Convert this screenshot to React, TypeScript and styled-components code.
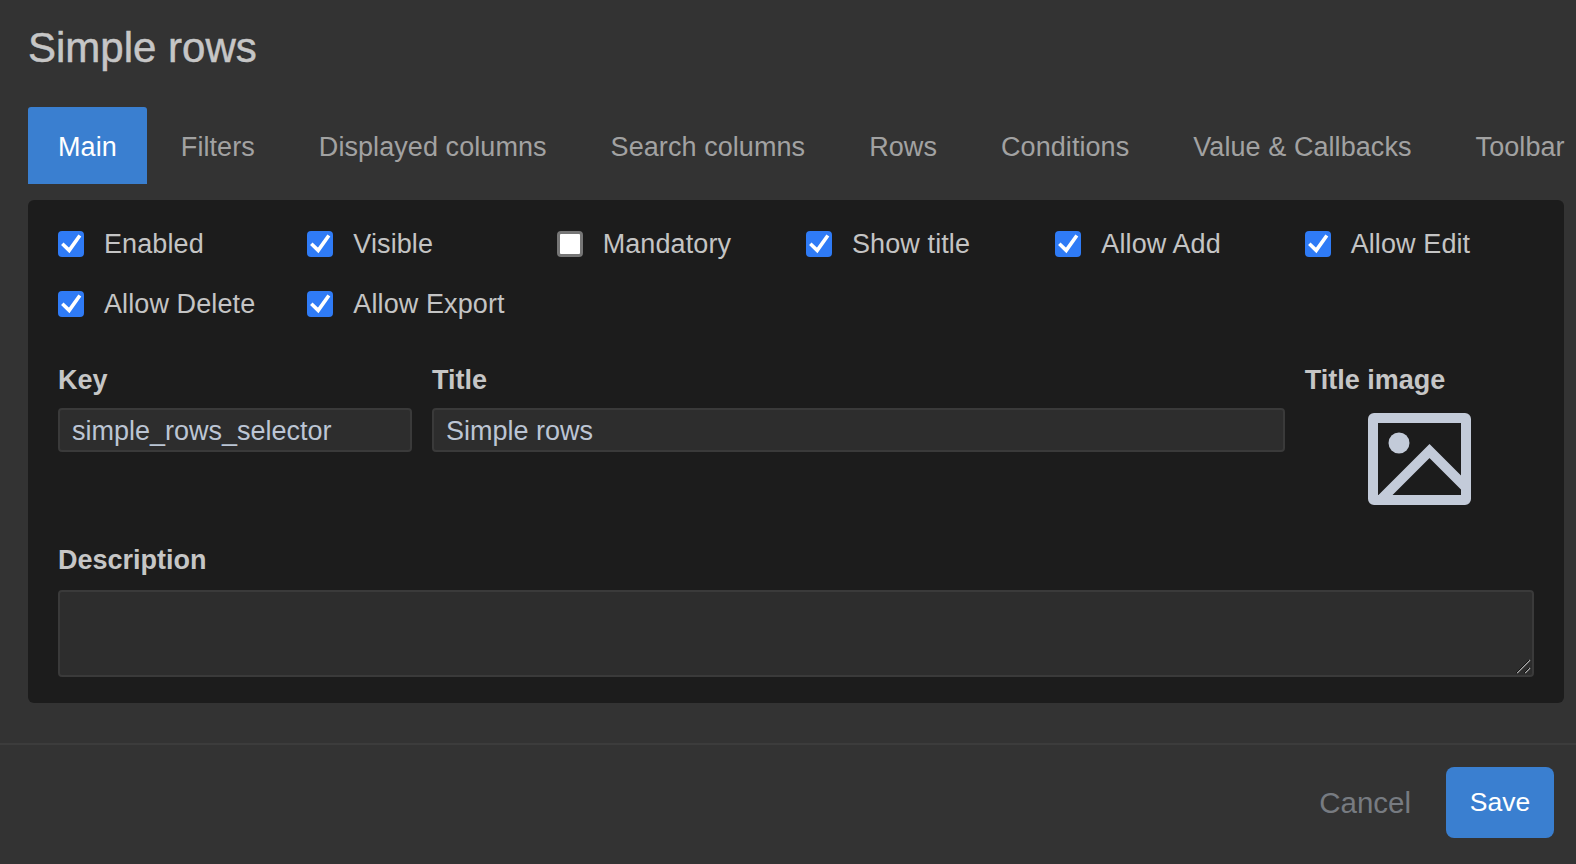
import React from "react";
import styled, { createGlobalStyle } from "styled-components";

const GlobalStyle = createGlobalStyle`
  html, body {
    margin: 0;
    padding: 0;
    background: #333333;
  }
  * {
    box-sizing: border-box;
  }
`;

const Page = styled.div`
  width: 1576px;
  height: 864px;
  overflow: hidden;
  background: #333333;
  font-family: "Liberation Sans", Arial, sans-serif;
  display: flex;
  flex-direction: column;
`;

const Header = styled.div`
  padding: 0 28px;
  height: 107px;
  flex: none;
`;

const Heading = styled.h1`
  margin: 0;
  padding-top: 24px;
  font-size: 42px;
  line-height: 48px;
  font-weight: 400;
  color: #c6c6c6;
  -webkit-text-stroke: 0.5px #c6c6c6;
`;

const Tabs = styled.div`
  display: flex;
  gap: 4px;
  padding: 0 28px;
  height: 77px;
  flex: none;
  white-space: nowrap;
`;

const Tab = styled.div<{ $active?: boolean }>`
  flex: none;
  padding: 0 30px;
  height: 77px;
  line-height: 81px;
  font-size: 27px;
  letter-spacing: 0.07px;
  border-radius: 3px 3px 0 0;
  background: ${(p) => (p.$active ? "#3a7fd0" : "transparent")};
  color: ${(p) => (p.$active ? "#ffffff" : "#a2a2a2")};
`;

const Panel = styled.div`
  margin: 16px 12px 0 28px;
  height: 503px;
  flex: none;
  padding: 30px 30px 0;
  background: #1c1c1c;
  border-radius: 6px;
`;

const Grid = styled.div`
  display: grid;
  grid-template-columns: repeat(12, 1fr);
  column-gap: 20px;
`;

const CheckGrid = styled(Grid)`
  row-gap: 30px;
`;

const CheckItem = styled.label`
  grid-column: span 2;
  display: flex;
  align-items: center;
  gap: 20px;
  height: 32px;
  margin-top: -2px;
  font-size: 27px;
  letter-spacing: 0.1px;
  color: #c4c4c4;
`;

const CheckBox = styled.span<{ $checked?: boolean }>`
  flex: none;
  width: 26px;
  height: 26px;
  border-radius: 4px;
  display: block;
  background: ${(p) => (p.$checked ? "#2f7bf6" : "#ffffff")};
  border: ${(p) => (p.$checked ? "none" : "3px solid #767676")};
`;

const FieldGrid = styled(Grid)`
  margin-top: 44px;
`;

const Field = styled.div<{ $span: number }>`
  grid-column: span ${(p) => p.$span};
  min-width: 0;
`;

const FieldLabel = styled.div`
  font-size: 27px;
  line-height: 32px;
  font-weight: 700;
  color: #c6c6c6;
`;

const TextInput = styled.input`
  display: block;
  width: 100%;
  height: 44px;
  margin-top: 12px;
  padding: 2px 12px 0;
  background: #2d2d2d;
  border: 2px solid #3a3a3a;
  border-radius: 4px;
  font-family: inherit;
  font-size: 27px;
  color: #bcc5d4;
  outline: none;
`;

const ImageSlot = styled.div`
  display: flex;
  justify-content: center;
  margin-top: 17px;
`;

const DescriptionBlock = styled.div`
  margin-top: 39px;
`;

const AreaWrap = styled.div`
  position: relative;
  margin-top: 14px;
`;

const TextArea = styled.textarea`
  display: block;
  width: 100%;
  height: 87px;
  padding: 10px 12px;
  background: #2d2d2d;
  border: 2px solid #3a3a3a;
  border-radius: 4px;
  font-family: inherit;
  font-size: 27px;
  color: #bcc5d4;
  outline: none;
  resize: none;
`;

const ResizeGrip = styled.svg`
  position: absolute;
  right: 3px;
  bottom: 3px;
  pointer-events: none;
`;

const Footer = styled.div`
  margin-top: 40px;
  height: 121px;
  flex: none;
  border-top: 2px solid #3c3c3c;
  display: flex;
  align-items: flex-start;
  justify-content: flex-end;
  gap: 35px;
  padding: 22px 22px 0 0;
`;

const CancelButton = styled.button`
  height: 71px;
  padding: 0;
  border: none;
  background: transparent;
  font-family: inherit;
  font-size: 29.5px;
  color: #777b81;
`;

const SaveButton = styled.button`
  width: 108px;
  height: 71px;
  border: none;
  border-radius: 8px;
  background: #3a7fd0;
  font-family: inherit;
  font-size: 26.5px;
  color: #ffffff;
`;

const tabs = [
  "Main",
  "Filters",
  "Displayed columns",
  "Search columns",
  "Rows",
  "Conditions",
  "Value & Callbacks",
  "Toolbar",
];

const checks = [
  { label: "Enabled", checked: true },
  { label: "Visible", checked: true },
  { label: "Mandatory", checked: false },
  { label: "Show title", checked: true },
  { label: "Allow Add", checked: true },
  { label: "Allow Edit", checked: true },
  { label: "Allow Delete", checked: true },
  { label: "Allow Export", checked: true },
];

const CheckMark = () => (
  <svg width="26" height="26" viewBox="0 0 26 26" fill="none">
    <path
      d="M5.6 14l5.6 5.4L20.8 6"
      stroke="#ffffff"
      strokeWidth="3.6"
      strokeLinecap="square"
    />
  </svg>
);

const ImageIcon = () => (
  <svg width="103" height="92" viewBox="0 0 103 92" fill="none">
    <rect x="5" y="5" width="93" height="82" rx="1" stroke="#c3cbd9" strokeWidth="10" />
    <circle cx="31" cy="30" r="10.5" fill="#c3cbd9" />
    <path d="M10.5 89L61.5 38L98 74.5" stroke="#c3cbd9" strokeWidth="10" />
  </svg>
);

const App = () => {
  return (
    <Page>
      <GlobalStyle />
      <Header>
        <Heading>Simple rows</Heading>
      </Header>
      <Tabs>
        {tabs.map((t, i) => (
          <Tab key={t} $active={i === 0}>
            {t}
          </Tab>
        ))}
      </Tabs>
      <Panel>
        <CheckGrid>
          {checks.map((c) => (
            <CheckItem key={c.label}>
              <CheckBox $checked={c.checked}>{c.checked && <CheckMark />}</CheckBox>
              {c.label}
            </CheckItem>
          ))}
        </CheckGrid>
        <FieldGrid>
          <Field $span={3}>
            <FieldLabel>Key</FieldLabel>
            <TextInput defaultValue="simple_rows_selector" />
          </Field>
          <Field $span={7}>
            <FieldLabel>Title</FieldLabel>
            <TextInput defaultValue="Simple rows" />
          </Field>
          <Field $span={2}>
            <FieldLabel>Title image</FieldLabel>
            <ImageSlot>
              <ImageIcon />
            </ImageSlot>
          </Field>
        </FieldGrid>
        <DescriptionBlock>
          <FieldLabel>Description</FieldLabel>
          <AreaWrap>
            <TextArea />
            <ResizeGrip width="16" height="16" viewBox="0 0 16 16" fill="none">
              <path d="M2 15L15 2" stroke="#a8a8a8" strokeWidth="1.5" />
              <path d="M1 15L14 2" stroke="#111111" strokeWidth="1" />
              <path d="M10 15L15 10" stroke="#a8a8a8" strokeWidth="1.5" />
              <path d="M9 15L14 10" stroke="#111111" strokeWidth="1" />
            </ResizeGrip>
          </AreaWrap>
        </DescriptionBlock>
      </Panel>
      <Footer>
        <CancelButton>Cancel</CancelButton>
        <SaveButton>Save</SaveButton>
      </Footer>
    </Page>
  );
};

export default App;
